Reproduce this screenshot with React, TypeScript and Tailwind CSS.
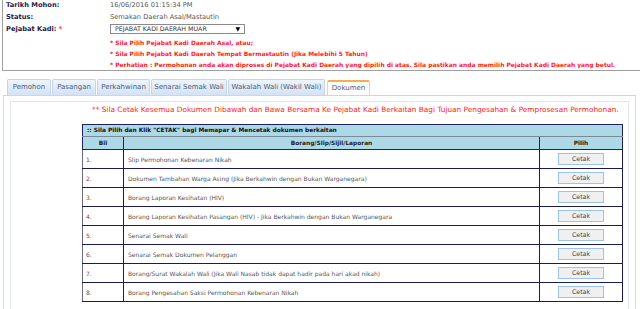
import React from 'react';

const tabs = ['Pemohon', 'Pasangan', 'Perkahwinan', 'Senarai Semak Wali', 'Wakalah Wali (Wakil Wali)', 'Dokumen'];
const tabWidths = ['w-[44px]', 'w-[44px]', 'w-[53px]', 'w-[76px]', 'w-[97px]', 'w-[43px]'];

const docs = [
    'Slip Permohonan Kebenaran Nikah',
    'Dokumen Tambahan Warga Asing (Jika Berkahwin dengan Bukan Warganegara)',
    'Borang Laporan Kesihatan (HIV)',
    'Borang Laporan Kesihatan Pasangan (HIV) - Jika Berkahwin dengan Bukan Warganegara',
    'Senarai Semak Wali',
    'Senarai Semak Dokumen Pelanggan',
    'Borang/Surat Wakalah Wali (Jika Wali Nasab tidak dapat hadir pada hari akad nikah)',
    'Borang Pengesahan Saksi Permohonan Kebenaran Nikah',
];

export default function App() {
    return (
        <div className="w-[640px] h-[309px] overflow-hidden bg-white font-['DejaVu_Sans',Verdana,sans-serif]">
            {/* maklumat permohonan */}
            <div className="ml-[2px] h-[71px] border-l border-b border-[#a0a0a0] pl-[3px]">
                <div className="flex h-[11px] items-center text-[6.7px] leading-none">
                    <div className="w-[104px] font-bold text-[#1c1c4c]">Tarikh Mohon:</div>
                    <div className="text-[#555]">16/06/2016 01:15:34 PM</div>
                </div>
                <div className="flex h-[12px] items-center text-[6.7px] leading-none">
                    <div className="w-[104px] font-bold text-[#1c1c4c]">Status:</div>
                    <div className="text-[#555]">Semakan Daerah Asal/Mastautin</div>
                </div>
                <div className="flex h-[12px] items-center text-[6.7px] leading-none">
                    <div className="w-[104px] font-bold text-[#1c1c4c]">
                        Pejabat Kadi: <span className="text-[#ff3333]">*</span>
                    </div>
                    <div className="flex h-[10px] w-[135px] items-center justify-between border border-[#8a8a8a] bg-white px-[4px] text-[6.3px] text-[#333]">
                        <span>PEJABAT KADI DAERAH MUAR</span>
                        <span className="text-[6px] text-black">▼</span>
                    </div>
                </div>
                <div className="pl-[104px] pt-[2px] text-[5.95px] font-bold leading-[11px] text-[#ff1a1a] whitespace-nowrap">
                    <div>* Sila Pilih Pejabat Kadi Daerah Asal, atau;</div>
                    <div>* Sila Pilih Pejabat Kadi Daerah Tempat Bermastautin (Jika Melebihi 5 Tahun)</div>
                    <div>* Perhatian : Permohonan anda akan diproses di Pejabat Kadi Daerah yang dipilih di atas. Sila pastikan anda memilih Pejabat Kadi Daerah yang betul.</div>
                </div>
            </div>

            {/* tab */}
            <div className="mt-[8px] ml-[3px] mr-[4px] flex items-end gap-[1px] border-b border-[#c8d6ea] pl-[4px]">
                {tabs.map((t, i) => {
                    const active = i === tabs.length - 1;
                    return (
                        <div
                            key={t}
                            className={`${tabWidths[i]} flex items-center justify-center rounded-t-[2px] border border-b-0 text-[7px] text-[#4f5d78] ${
                                active
                                    ? 'h-[15px] border-[#c8d6ea] border-t-2 border-t-[#f2b04c] bg-white ml-[1px]'
                                    : 'h-[16px] border-[#c6d4ea] bg-gradient-to-b from-[#eef4fb] to-[#d3e2f4]'
                            }`}
                        >
                            {t}
                        </div>
                    );
                })}
            </div>

            {/* panel dokumen */}
            <div className="ml-[3px] mr-[4px] h-[220px] border-l border-r border-[#d5e0ef] px-[6px] pt-[5px]">
                <div className="h-[210px] border border-[#dfe6f2] px-[71px] pt-[2px]">
                    <div className="pl-[10px] text-[7.35px] leading-[11px] text-[#ff1a1a] whitespace-nowrap">
                        ** Sila Cetak Kesemua Dokumen Dibawah dan Bawa Bersama Ke Pejabat Kadi Berkaitan Bagi Tujuan Pengesahan &amp; Pemprosesan Permohonan.
                    </div>
                    <table className="mt-[9px] w-[541px] border-collapse text-[6px] text-[#555]">
                        <thead>
                            <tr className="h-[12px] bg-[#add8e6]">
                                <th colSpan={3} className="border border-[#20205a] border-b-[#7a8a99] pl-[4px] text-left text-[5.85px] font-bold text-[#111]">
                                    :: Sila Pilih dan Klik "CETAK" bagi Memapar &amp; Mencetak dokumen berkaitan
                                </th>
                            </tr>
                            <tr className="h-[13px] bg-[#add8e6] text-[5.85px] text-[#222]">
                                <th className="w-[41px] border border-[#20205a] font-bold">Bil</th>
                                <th className="border border-[#20205a] font-bold">Borang/Slip/Sijil/Laporan</th>
                                <th className="w-[83px] border border-[#20205a] font-bold">Pilih</th>
                            </tr>
                        </thead>
                        <tbody>
                            {docs.map((d, i) => (
                                <tr key={d} className="h-[19px]">
                                    <td className="border border-[#1a1a55] border-l-[#6a6a88] pl-[3px]">{i + 1}.</td>
                                    <td className="border border-[#1a1a55] pl-[4px]">{d}</td>
                                    <td className="border border-[#1a1a55]">
                                        <div className="flex justify-center">
                                            <button className="flex h-[12px] w-[46px] items-center justify-center border border-[#9cc2ee] bg-[#f0f0f0] text-[6.3px] text-[#444]">
                                                Cetak
                                            </button>
                                        </div>
                                    </td>
                                </tr>
                            ))}
                        </tbody>
                    </table>
                </div>
            </div>
        </div>
    );
}
